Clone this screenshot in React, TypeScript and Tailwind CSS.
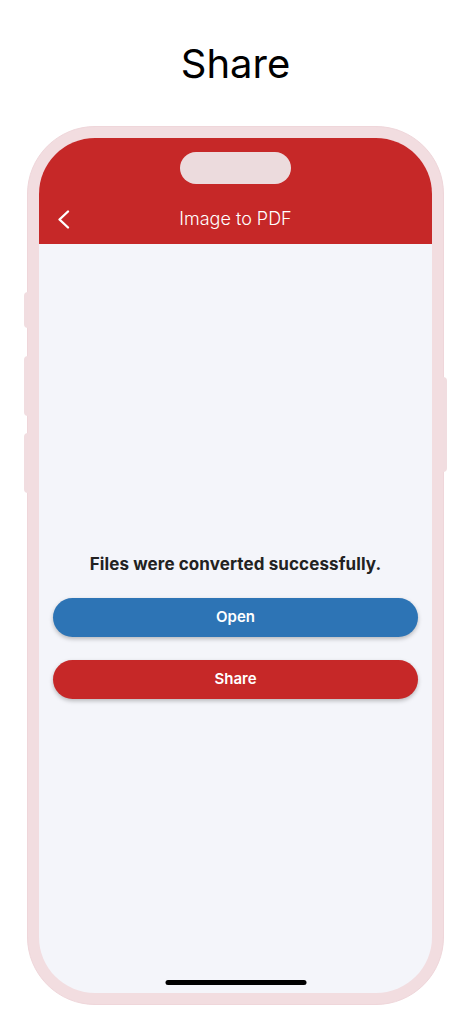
export default function App() {
  return (
    <div
      className="w-[471px] h-[1024px] bg-white flex flex-col items-center overflow-hidden"
      style={{ fontFamily: "Inter, 'Liberation Sans', sans-serif" }}
    >
      <h1 className="mt-[40px] h-[48px] text-[40px] leading-[48px] text-black font-normal">Share</h1>

      <div className="relative mt-[38px]">
        {/* side buttons */}
        <div className="absolute left-[-3px] top-[166px] w-[4px] h-[36px] rounded-l bg-[#f1dde0]" />
        <div className="absolute left-[-3px] top-[230px] w-[4px] h-[60px] rounded-l bg-[#f1dde0]" />
        <div className="absolute left-[-3px] top-[307px] w-[4px] h-[60px] rounded-l bg-[#f1dde0]" />
        <div className="absolute right-[-3px] top-[251px] w-[4px] h-[95px] rounded-r bg-[#f1dde0]" />

        <div className="w-[417px] h-[879px] rounded-[68px] bg-[#f2dde0] border-[1px] border-[#efd6da] p-[11px]">
          <div className="relative w-full h-full rounded-[56px] overflow-hidden bg-[#f4f5fa] flex flex-col">
            <div className="h-[106px] bg-[#c62828] flex flex-col items-center">
              <div className="mt-[14px] w-[111px] h-[32px] rounded-full bg-[#ecdbdd]" />
              <div className="relative w-full mt-[18px] h-[32px] flex items-center justify-center">
                <svg
                  className="absolute left-[18px] top-[7px]"
                  width="14"
                  height="21"
                  viewBox="0 0 14 21"
                  fill="none"
                  stroke="white"
                  strokeWidth="2.4"
                  strokeLinecap="round"
                  strokeLinejoin="round"
                >
                  <polyline points="11,2.5 2.5,10.5 11,18.5" />
                </svg>
                <span className="text-white text-[18px] font-light">Image to PDF</span>
              </div>
            </div>

            <div className="flex flex-col items-center px-[14px] mt-[308px]">
              <p className="text-[17px] font-bold text-[#222] tracking-[0.1px]">Files were converted successfully.</p>
              <button className="mt-[20px] w-full h-[39px] rounded-full bg-[#2d74b5] text-white text-[15px] font-semibold shadow-[0_2px_4px_rgba(0,0,0,0.25)]">
                Open
              </button>
              <button className="mt-[23px] w-full h-[39px] rounded-full bg-[#c62828] text-white text-[15px] font-semibold shadow-[0_2px_4px_rgba(0,0,0,0.25)]">
                Share
              </button>
            </div>

            <div className="absolute bottom-[8px] left-1/2 -translate-x-1/2 w-[141px] h-[5px] rounded-full bg-black" />
          </div>
        </div>
      </div>
    </div>
  );
}
